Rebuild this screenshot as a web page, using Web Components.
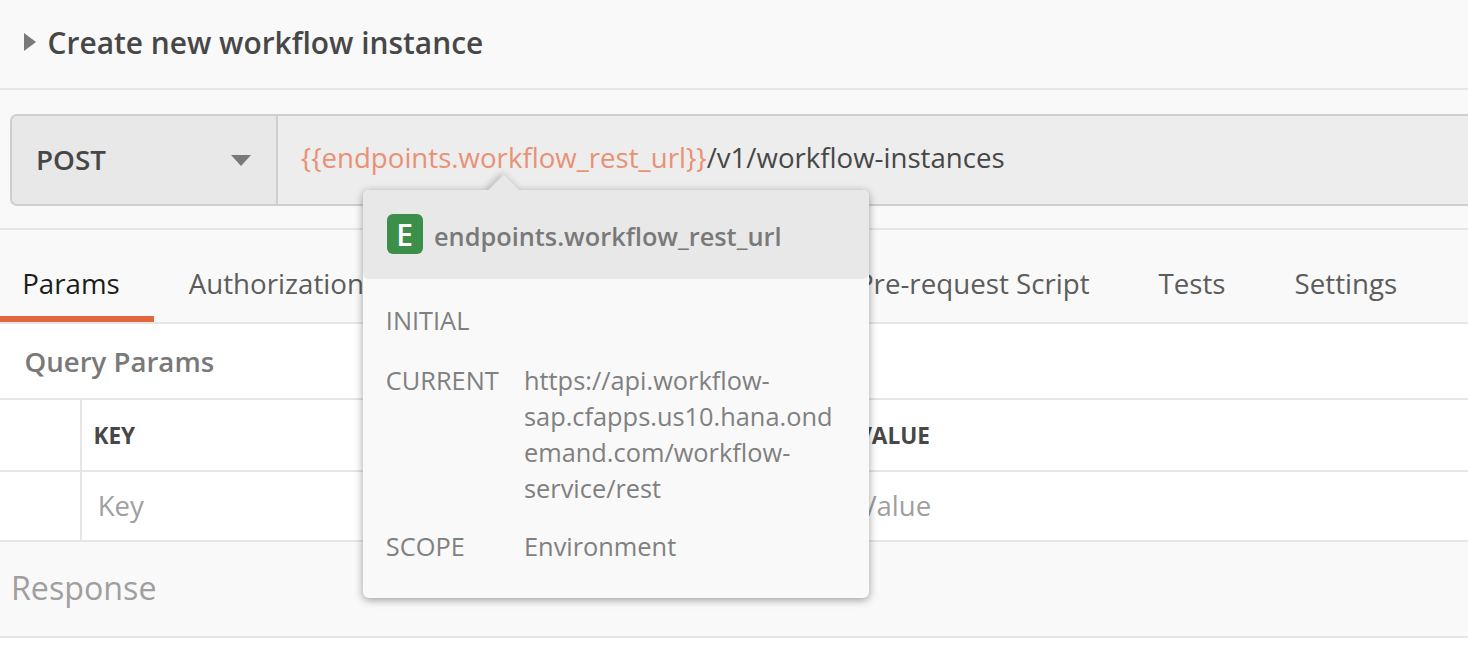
<!DOCTYPE html>
<html lang="en">
<head>
<meta charset="utf-8">
<title>Create new workflow instance</title>
<style>
  html, body { margin: 0; height: 100%; }
  body { background: #fff; font-family: "Open Sans", "Noto Sans", sans-serif; overflow: hidden; color: #474747; }
</style>
</head>
<body>
<request-editor></request-editor>
<script>
  const define = (name, html) => {
    const template = document.createElement('template');
    template.innerHTML = html;
    customElements.define(name, class extends HTMLElement {
      constructor() {
        super();
        this.attachShadow({ mode: 'open' }).append(template.content.cloneNode(true));
      }
    });
  };

  define('request-title', `
    <style>
      :host { display: flex; align-items: center; box-sizing: border-box; height: 90px; padding: 0 24px 3px; background: #f9f9f9; border-bottom: 2px solid #e6e6e6; font-size: 29.88px; font-weight: 600; color: #474747; white-space: nowrap; }
      svg { width: 12px; height: 18px; margin: 0 11.6px 1px 0; flex: none; }
    </style>
    <svg viewBox="0 0 12 18"><path d="M0 0L12 9L0 18Z" fill="#797979"/></svg><slot></slot>`);

  define('method-select', `
    <style>
      :host { display: flex; align-items: center; justify-content: space-between; box-sizing: border-box; width: 266px; padding: 0 25px 2px 24px; background: #e8e8e8; border-right: 2px solid #cecece; border-radius: 6px 0 0 6px; font-size: 27.8px; font-weight: 600; }
      svg { width: 20px; height: 11px; margin-top: 3px; }
    </style>
    <slot></slot><svg viewBox="0 0 20 11"><path d="M0 0H20L10 11Z" fill="#797979"/></svg>`);

  define('url-field', `
    <style>
      :host { display: flex; align-items: center; flex: 1; padding: 0 0 7px 22.8px; font-size: 27.64px; white-space: nowrap; }
    </style>
    <slot></slot>`);

  define('env-variable', `
    <style>:host { display: inline; color: #e99175; }</style><slot></slot>`);

  define('request-bar', `
    <style>
      :host { display: block; box-sizing: border-box; height: 140px; padding: 24px 0 22px 10px; background: #f9f9f9; border-bottom: 2px solid #e6e6e6; }
      div { display: flex; box-sizing: border-box; height: 92px; border: 2px solid #cecece; border-right: 0; border-radius: 7px 0 0 7px; background: #ededed; }
    </style>
    <div><slot></slot></div>`);

  define('tab-item', `
    <style>
      :host { display: flex; align-items: center; box-sizing: border-box; height: 92px; padding: 14px 34.2px 0 34.8px; font-size: 27.7px; color: #5c5c5c; white-space: nowrap; }
      :host([active]) { color: #1c1c1c; padding-left: 22.2px; box-shadow: inset 0 -6px #e3673d; }
      :host([after-gap]) { margin-left: auto; }
    </style>
    <slot></slot>`);

  define('tab-strip', `
    <style>
      :host { display: flex; box-sizing: border-box; height: 94px; padding-right: 36.6px; background: #f9f9f9; border-bottom: 2px solid #e6e6e6; }
    </style>
    <slot></slot>`);

  define('param-heading', `
    <style>
      :host { display: flex; align-items: center; box-sizing: border-box; height: 76px; padding-left: 24.5px; border-bottom: 2px solid #e6e6e6; font-size: 27.6px; font-weight: 600; color: #797979; background: #fff; }
    </style>
    <slot></slot>`);

  define('param-row', `
    <style>
      :host { display: grid; grid-template-columns: 80px 774px 1fr; box-sizing: border-box; height: 70px; border-bottom: 2px solid #e6e6e6; background: #fff; font-size: 27.6px; color: #9f9f9f; }
      :host([head]) { height: 72px; font-size: 22.6px; font-weight: 700; color: #474747; }
      div { display: flex; align-items: center; border-left: 2px solid #e6e6e6; padding: 0 0 3px 15.7px; }
      .blank { border: 0; padding: 0; }
      .value { padding-left: 4px; }
      :host([head]) div { padding: 0 0 0 11.4px; }
      :host([head]) .value { padding-left: 1.2px; }
    </style>
    <div class="blank"></div><div><slot name="key"></slot></div><div class="value"><slot name="value"></slot></div>`);

  define('response-bar', `
    <style>
      :host { display: flex; align-items: center; box-sizing: border-box; height: 96px; padding: 0 0 4px 11px; background: #f9f9f9; border-bottom: 2px solid #e6e6e6; font-size: 32.2px; color: #9f9f9f; }
    </style>
    <slot></slot>`);

  define('popover-entry', `
    <style>
      :host { display: grid; grid-template-columns: 138.2px 316px; font-size: 25.36px; line-height: 36px; color: #808080; }
      :host([spaced]) { padding-bottom: 2px; }
      .value { overflow-wrap: anywhere; }
    </style>
    <div><slot name="label"></slot></div><div class="value"><slot></slot></div>`);

  define('variable-popover', `
    <style>
      :host { display: block; position: absolute; left: 363px; top: 190px; width: 506px; height: 408px; border-radius: 6px; background: #f9f9f9; box-shadow: 0 2px 8px rgba(0,0,0,.38); }
      .arrow { position: absolute; left: 116px; top: -26px; width: 50px; height: 26px; overflow: hidden; }
      .arrow::before { content: ""; position: absolute; left: 14px; top: 15px; width: 21.5px; height: 21.5px; background: #e8e8e8; transform: rotate(45deg); box-shadow: -3px 0 7px rgba(0,0,0,.2); }
      header { position: relative; display: flex; align-items: center; box-sizing: border-box; height: 89px; padding: 2px 0 0 24px; border-radius: 6px; background: #e8e8e8; font-size: 25.34px; font-weight: 600; color: #797979; }
      .badge { display: flex; align-items: center; justify-content: center; box-sizing: border-box; width: 36px; height: 40px; margin: 0 11px 3px 0; padding: 1px 1px 0 0; border-radius: 6px; background: #3c8f49; color: #fff; font-size: 30px; font-weight: 650; line-height: 40px; }
      .body { display: grid; row-gap: 22px; padding: 23px 0 0 22.8px; }
    </style>
    <div class="arrow"></div>
    <header><span class="badge"><slot name="scope"></slot></span><slot name="name"></slot></header>
    <div class="body"><slot></slot></div>`);

  define('request-editor', `
    <style>
      :host { display: block; position: relative; height: 652px; overflow: hidden; background: #fff; }
    </style>
    <request-title>Create new workflow instance</request-title>
    <request-bar>
      <method-select>POST</method-select>
      <url-field><env-variable>{{endpoints.workflow_rest_url}}</env-variable><span>/v1/workflow-instances</span></url-field>
    </request-bar>
    <tab-strip>
      <tab-item active>Params</tab-item>
      <tab-item>Authorization</tab-item>
      <tab-item after-gap>Pre-request Script</tab-item>
      <tab-item>Tests</tab-item>
      <tab-item>Settings</tab-item>
    </tab-strip>
    <param-heading>Query Params</param-heading>
    <param-row head><span slot="key">KEY</span><span slot="value">VALUE</span></param-row>
    <param-row><span slot="key">Key</span><span slot="value">Value</span></param-row>
    <response-bar>Response</response-bar>
    <variable-popover>
      <span slot="scope">E</span><span slot="name">endpoints.workflow_rest_url</span>
      <popover-entry spaced><span slot="label">INITIAL</span></popover-entry>
      <popover-entry><span slot="label">CURRENT</span>https://api.workflow-sap.cfapps.us10.hana.ondemand.com/workflow-service/rest</popover-entry>
      <popover-entry><span slot="label">SCOPE</span>Environment</popover-entry>
    </variable-popover>`);
</script>
</body>
</html>
